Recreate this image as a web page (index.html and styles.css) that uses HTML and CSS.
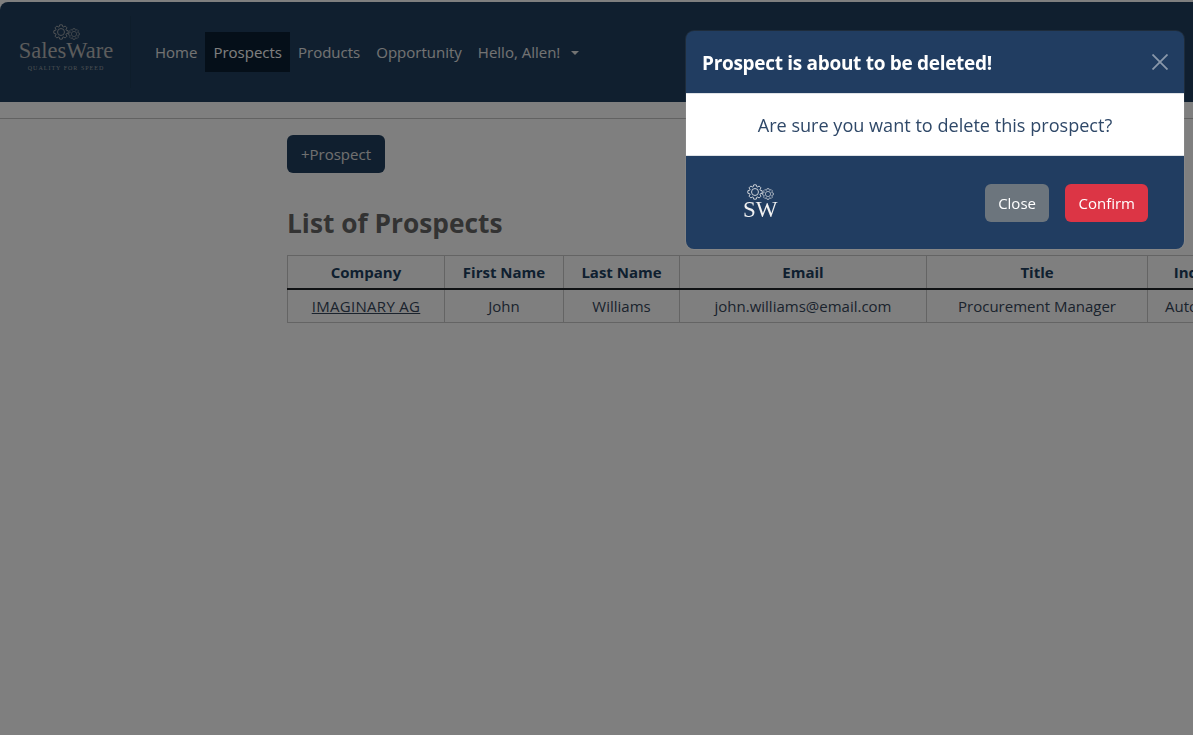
FILE: index.html
```html
<!DOCTYPE html>
<html>
    <head>
        <title>SalesWare</title>
        <meta name="viewport" content="width=device-width, initial-scale=1">
        <link rel="stylesheet" href="styles.css">
    </head>
    <body>
        <svg class="defs" width="0" height="0">
            <symbol id="gear" viewBox="-11 -11 22 22">
                <path fill="none" stroke="currentColor" stroke-width="1.1" stroke-linejoin="round" d="M-2.57-7.05L-1.74-9.85L1.74-9.85L2.57-7.05L3.17-6.8L5.74-8.19L8.19-5.74L6.8-3.17L7.05-2.57L9.85-1.74L9.85 1.74L7.05 2.57L6.8 3.17L8.19 5.74L5.74 8.19L3.17 6.8L2.57 7.05L1.74 9.85L-1.74 9.85L-2.57 7.05L-3.17 6.8L-5.74 8.19L-8.19 5.74L-6.8 3.17L-7.05 2.57L-9.85 1.74L-9.85-1.74L-7.05-2.57L-6.8-3.17L-8.19-5.74L-5.74-8.19L-3.17-6.8Z"/>
                <circle r="4.8" fill="none" stroke="currentColor" stroke-width="1.1"/>
            </symbol>
        </svg>

        <nav class="navbar">
            <a class="brand" href="#">
                <span class="gears">
                    <svg class="gear-big"><use href="#gear"/></svg>
                    <svg class="gear-small"><use href="#gear"/></svg>
                </span>
                <span class="brand-name">SalesWare</span>
                <span class="brand-tag">QUALITY FOR SPEED</span>
            </a>
            <span class="brand-sep"></span>
            <ul class="nav-links">
                <li><a href="#">Home</a></li>
                <li><a class="active" href="#">Prospects</a></li>
                <li><a href="#">Products</a></li>
                <li><a href="#">Opportunity</a></li>
                <li><a class="dropdown" href="#">Hello, Allen!</a></li>
            </ul>
        </nav>
        <hr class="rule">

        <main class="content">
            <button class="add-btn">+Prospect</button>
            <h2 class="page-title">List of Prospects</h2>
            <table class="prospects">
                <thead>
                    <tr>
                        <th class="col-company">Company</th>
                        <th class="col-first">First Name</th>
                        <th class="col-last">Last Name</th>
                        <th class="col-email">Email</th>
                        <th class="col-title">Title</th>
                        <th class="col-industry">Industry</th>
                    </tr>
                </thead>
                <tbody>
                    <tr>
                        <td><a href="#">IMAGINARY AG</a></td>
                        <td>John</td>
                        <td>Williams</td>
                        <td>john.williams@email.com</td>
                        <td>Procurement Manager</td>
                        <td>Automotive</td>
                    </tr>
                </tbody>
            </table>
        </main>

        <div class="backdrop"></div>

        <div class="modal">
            <div class="modal-header">
                <h5 class="modal-title">Prospect is about to be deleted!</h5>
                <svg class="modal-close" viewBox="0 0 16 16"><path d="M0.5 0.5L15.5 15.5M15.5 0.5L0.5 15.5"/></svg>
            </div>
            <div class="modal-body">Are sure you want to delete this prospect?</div>
            <div class="modal-footer">
                <span class="sw-logo">
                    <span class="gears">
                        <svg class="gear-big"><use href="#gear"/></svg>
                        <svg class="gear-small"><use href="#gear"/></svg>
                    </span>
                    <span class="sw-name">SW</span>
                </span>
                <div class="modal-actions">
                    <button class="btn btn-close">Close</button>
                    <button class="btn btn-confirm">Confirm</button>
                </div>
            </div>
        </div>
    </body>
</html>
```

FILE: styles.css
```css
html, body {
    height: 100%;
}

body {
    margin: 0;
    padding-top: 2px;
    box-sizing: border-box;
    background-color: #fff;
    color: #212529;
    font-family: "Open Sans", "Noto Sans", sans-serif;
    font-size: 15px;
    overflow: hidden;
}

.defs {
    position: absolute;
}

.navbar {
    display: flex;
    align-items: center;
    height: 100px;
    padding-left: 19px;
    background-color: #203f5f;
    border-top-left-radius: 8px;
}

.brand {
    display: flex;
    flex-direction: column;
    align-items: center;
    width: 94px;
    margin-bottom: 9px;
    color: #b8b8b8;
    text-decoration: none;
}

.brand-sep {
    width: 1px;
    height: 72px;
    margin: 0 16px 0 17px;
    background-color: #1d3a57;
}

.gears {
    display: flex;
    align-items: center;
    justify-content: center;
    height: 17px;
}

.gear-big {
    width: 16px;
    height: 16px;
}

.gear-small {
    width: 12px;
    height: 12px;
    margin-left: -1px;
    margin-top: 3px;
}

.brand-name {
    font-family: "Liberation Serif", serif;
    font-size: 22.5px;
    line-height: 20px;
}

.brand-tag {
    font-family: "Liberation Serif", serif;
    font-size: 6px;
    line-height: 8px;
    margin-top: 3px;
    letter-spacing: 1px;
    opacity: 0.8;
}

.nav-links {
    display: flex;
    list-style: none;
    margin: 0;
    padding: 0;
}

.nav-links a {
    display: block;
    padding: 0 8px;
    line-height: 40px;
    color: #e6e6e6;
    text-decoration: none;
}

.nav-links a.active {
    background-color: #0a1e32;
    color: #fff;
}

.dropdown::after {
    content: "";
    display: inline-block;
    margin-left: 11px;
    vertical-align: 3px;
    border-top: 4px solid;
    border-left: 4px solid transparent;
    border-right: 4px solid transparent;
}

.rule {
    margin: 16px 0 0;
    border: 0;
    border-top: 1px solid #c4c4c4;
}

.content {
    padding: 16px 0 0 287px;
}

.add-btn {
    display: block;
    height: 38px;
    width: 98px;
    padding: 0;
    border: 0;
    border-radius: 6px;
    background-color: #203f5f;
    color: #e0e0e0;
    font: inherit;
}

.page-title {
    margin: 30px 0 12px;
    font-size: 26.3px;
    line-height: 40px;
    font-weight: 700;
    color: #666;
}

.prospects {
    border-collapse: collapse;
    table-layout: fixed;
    width: 970px;
    text-align: center;
    color: #36465a;
}

.prospects th, .prospects td {
    border: 1px solid #c8c8c8;
    padding: 0;
    height: 32px;
    white-space: nowrap;
    overflow: hidden;
}

.prospects th {
    font-weight: 700;
    color: #203f5f;
    border-bottom: 2px solid #212529;
}

.prospects a {
    color: inherit;
    letter-spacing: 0.3px;
}

.col-company { width: 156px; }
.col-first { width: 118px; }
.col-last { width: 115px; }
.col-email { width: 246px; }
.col-title { width: 220px; }
.col-industry { width: 115px; }

.backdrop {
    position: fixed;
    inset: 0;
    background-color: rgba(0, 0, 0, 0.5);
}

.modal {
    position: absolute;
    top: 31px;
    left: 686px;
    width: 498px;
    background-color: #213d61;
    border-radius: 8px;
    box-shadow: 0 0 0 1px rgba(255, 255, 255, 0.06);
    overflow: hidden;
    color: #fff;
}

.modal-header {
    display: flex;
    align-items: center;
    justify-content: space-between;
    height: 62px;
    padding: 0 16px;
    border-bottom: 1px solid #dee2e6;
}

.modal-title {
    margin: 2px 0 0;
    font-size: 19px;
    font-weight: 700;
    letter-spacing: -0.3px;
}

.modal-close {
    width: 16px;
    height: 16px;
}

.modal-close path {
    stroke: #8a98aa;
    stroke-width: 1.8;
    fill: none;
}

.modal-body {
    height: 61px;
    line-height: 63px;
    background-color: #fff;
    color: #2f4868;
    text-align: center;
    font-size: 18.1px;
    border-bottom: 1px solid #dee2e6;
}

.modal-footer {
    display: flex;
    align-items: center;
    justify-content: space-between;
    height: 93px;
    padding: 0 36px 0 57px;
}

.sw-logo {
    display: flex;
    flex-direction: column;
    align-items: center;
    margin-top: -4px;
    color: #f2f2f2;
}

.sw-name {
    font-family: "Liberation Serif", serif;
    font-size: 23px;
    line-height: 17px;
}

.modal-actions {
    display: flex;
    gap: 16px;
}

.btn {
    height: 38px;
    padding: 0 13.5px;
    border: 0;
    border-radius: 6px;
    color: #fff;
    font: inherit;
}

.btn-close {
    background-color: #6c757d;
}

.btn-confirm {
    padding: 0 13px;
    background-color: #dc3545;
}
```
